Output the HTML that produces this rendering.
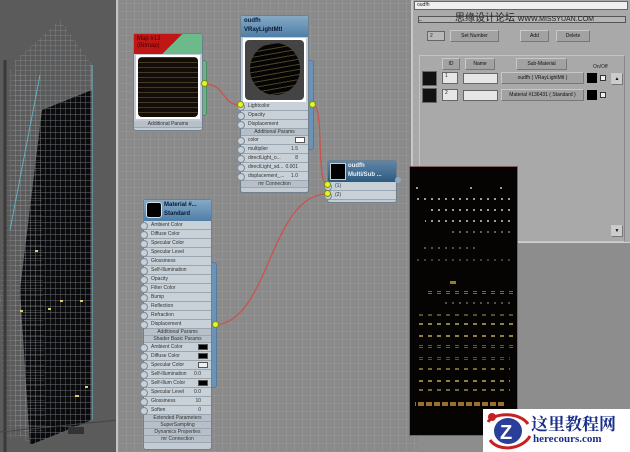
<!DOCTYPE html>
<html><head><meta charset="utf-8"><style>
*{margin:0;padding:0;box-sizing:border-box}
body{width:630px;height:452px;overflow:hidden;position:relative;background:#8d8d8d;font-family:"Liberation Sans",sans-serif;font-size:5.5px;color:#222}
.a{position:absolute}
.canvas{left:118px;top:0;width:300px;height:452px;background-color:#8a8a8a;background-image:repeating-linear-gradient(0deg,rgba(255,255,255,.06) 0 1px,transparent 1px 8px),repeating-linear-gradient(90deg,rgba(255,255,255,.06) 0 1px,transparent 1px 8px)}
.node{position:absolute;background:#c3ccd4;border:1px solid #6f7f8c;border-radius:3px}
.hdr{position:absolute;left:0;right:0;top:0;background:linear-gradient(#86a9c6,#4f7ea6);color:#061a33;font-weight:bold;font-size:6px;line-height:9px}
.row{position:absolute;left:0;right:0;height:9px;border-bottom:1px solid #9aa7b2;line-height:9px;padding-left:7px;color:#333;font-size:5px;background:#c8d0d8}
.row:before{content:"";position:absolute;left:-4px;top:1px;width:6px;height:6px;border-radius:50%;background:#c8d0d8;border:1px solid #7d8a96}
.sep{position:absolute;left:0;right:0;height:7px;line-height:7px;text-align:center;color:#333;font-size:5px;background:#b7c0c8;border-bottom:1px solid #9aa7b2}
.sw{position:absolute;right:3px;top:1px;width:10px;height:6px;background:#000;border:1px solid #555}
.v{position:absolute;right:10px;top:0}
.tab{position:absolute;background:#6b93b8;border:1px solid #557a9c;border-radius:0 3px 3px 0}
.sock{position:absolute;width:7px;height:7px;border-radius:50%;background:#e3f52a;border:1px solid #7b8d1b}
.btn{position:absolute;background:#a2a2a2;border:1px solid #777;border-top-color:#c8c8c8;border-left-color:#c8c8c8;text-align:center;font-size:5px;line-height:10px;color:#111}
.fld{position:absolute;background:#e6e6e6;border:1px solid #666;font-size:5px;padding-left:2px}
</style></head><body>
<div class="a" style="left:0;top:0;width:118px;height:452px;background:#5b5b5b;overflow:hidden">
<svg width="118" height="452">
<defs><pattern id="g" width="5" height="6" patternUnits="userSpaceOnUse"><rect width="5" height="6" fill="#0b0b0c"/><path d="M0 0H5M0 0V6" stroke="#6a6f78" stroke-width="0.9"/></pattern>
<pattern id="w" width="5" height="5" patternUnits="userSpaceOnUse"><path d="M0 0H5M0 0V5" stroke="#9a9fa5" stroke-width="0.5"/></pattern></defs>
<polygon points="60,20 92,65 92,420 30,445 15,430 10,200 15,60" fill="url(#w)"/>
<polygon points="42,110 92,90 92,420 30,445 20,290" fill="url(#g)"/>
<polygon points="10,70 40,80 45,430 5,440 0,300" fill="url(#w)" opacity=".8"/>
<line x1="40" y1="75" x2="10" y2="230" stroke="#5fb0c0"/>
<line x1="92" y1="65" x2="92" y2="420" stroke="#6bc0d0"/>
<line x1="5" y1="60" x2="5" y2="452" stroke="#3a3a3a" stroke-width="3"/>
<g fill="#d8d060"><rect x="35" y="250" width="3" height="2"/><rect x="60" y="300" width="3" height="2"/><rect x="80" y="300" width="3" height="2"/><rect x="20" y="310" width="3" height="2"/><rect x="75" y="395" width="4" height="2"/><rect x="85" y="386" width="3" height="2"/><rect x="48" y="308" width="3" height="2"/></g>
<line x1="0" y1="432" x2="118" y2="420" stroke="#444"/>
<rect x="68" y="427" width="16" height="7" fill="#333"/>
</svg></div>
<div class="a" style="left:116px;top:0;width:3px;height:452px;background:#c4c4c4"></div>
<div class="a canvas"></div>
<svg class="a" style="left:0;top:0" width="630" height="452">
<path d="M205 84 C225 84 222 105 240 105" stroke="#c8544c" stroke-width="1.3" fill="none"/>
<path d="M313 105 C325 105 315 185 328 185" stroke="#c8544c" stroke-width="1.3" fill="none"/>
<path d="M216 325 C270 320 270 195 327 194" stroke="#c8544c" stroke-width="1.3" fill="none"/>
</svg>
<div class="tab" style="left:200px;top:60px;width:7px;height:56px;background:#6cb38b;border-color:#4d8a68"></div>
<div class="node" style="left:133px;top:33px;width:70px;height:98px">
<div class="hdr" style="height:20px;background:linear-gradient(135deg,#c01616 0 55%,#6cb98a 55%);color:#400;font-weight:normal;padding:2px 3px;line-height:7px">Map #13<br>(Bitmap)</div>
<div class="a" style="left:2px;top:21px;width:64px;height:64px;background:#fff;padding:2px"><div style="width:100%;height:100%;background:#120d08;border-radius:4px;background-image:repeating-linear-gradient(0deg,transparent 0 4px,rgba(220,190,120,.25) 4px 5px)"></div></div>
<div class="sep" style="top:87px">Additional Params</div>
</div>
<div class="sock" style="left:201px;top:80px"></div>
<div class="tab" style="left:307px;top:60px;width:7px;height:90px"></div>
<div class="node" style="left:240px;top:15px;width:69px;height:178px">
<div class="hdr" style="height:21px;padding:1px 3px;line-height:9px">oudfh<br>VRayLightMtl</div>
<div class="a" style="left:2px;top:22px;width:63px;height:64px;background:#fff;padding:2px"><div style="width:100%;height:100%;background:#444;border-radius:4px;position:relative"><div style="position:absolute;left:5px;top:3px;width:50px;height:52px;border-radius:50%;background:#050505;background-image:repeating-linear-gradient(170deg,#050505 0 4px,rgba(210,180,90,.35) 4px 5px)"></div></div></div>
<div class="row" style="top:86px">Lightcolor</div>
<div class="row" style="top:95px">Opacity</div>
<div class="row" style="top:104px">Displacement</div>
<div class="sep" style="top:113px">Additional Params</div>
<div class="row" style="top:120px">color<span class="sw" style="background:#fff"></span></div>
<div class="row" style="top:129px">multiplier<span class="v">1.5</span></div>
<div class="row" style="top:138px">directLight_o...<span class="v">8</span></div>
<div class="row" style="top:147px">directLight_sd...<span class="v">0.001</span></div>
<div class="row" style="top:156px">displacement_...<span class="v">1.0</span></div>
<div class="sep" style="top:165px">mr Connection</div>
</div>
<div class="sock" style="left:237px;top:101px"></div>
<div class="sock" style="left:309px;top:101px"></div>
<div class="node" style="left:327px;top:160px;width:70px;height:43px">
<div class="hdr" style="height:21px;padding:1px 3px 1px 20px;line-height:9px;background:linear-gradient(#5e86a8,#2e5a80);color:#e8f0f8">oudfh<br>Multi/Sub ...</div>
<div class="a" style="left:2px;top:2px;width:16px;height:17px;background:#000;border:1px solid #ccc"></div>
<div class="row" style="top:21px">(1)</div>
<div class="row" style="top:30px">(2)</div>
</div>
<div class="sock" style="left:324px;top:181px"></div>
<div class="sock" style="left:324px;top:190px"></div>
<div class="a" style="left:395px;top:177px;width:6px;height:6px;border-radius:50%;background:#8fa8c0"></div>
<div class="tab" style="left:210px;top:262px;width:7px;height:126px"></div>
<div class="node" style="left:143px;top:199px;width:69px;height:251px">
<div class="hdr" style="height:21px;padding:1px 3px 1px 20px;line-height:9px">Material #...<br>Standard</div>
<div class="a" style="left:2px;top:2px;width:16px;height:16px;background:#000;border:1px solid #ddd;border-radius:3px"></div>
<div class="row" style="top:21px">Ambient Color</div>
<div class="row" style="top:30px">Diffuse Color</div>
<div class="row" style="top:39px">Specular Color</div>
<div class="row" style="top:48px">Specular Level</div>
<div class="row" style="top:57px">Glossiness</div>
<div class="row" style="top:66px">Self-Illumination</div>
<div class="row" style="top:75px">Opacity</div>
<div class="row" style="top:84px">Filter Color</div>
<div class="row" style="top:93px">Bump</div>
<div class="row" style="top:102px">Reflection</div>
<div class="row" style="top:111px">Refraction</div>
<div class="row" style="top:120px">Displacement</div>
<div class="sep" style="top:129px">Additional Params</div>
<div class="sep" style="top:136px">Shader Basic Params</div>
<div class="row" style="top:143px">Ambient Color<span class="sw"></span></div>
<div class="row" style="top:152px">Diffuse Color<span class="sw"></span></div>
<div class="row" style="top:161px">Specular Color<span class="sw" style="background:#eee"></span></div>
<div class="row" style="top:170px">Self-Illumination<span class="v">0.0</span></div>
<div class="row" style="top:179px">Self-Illum Color<span class="sw"></span></div>
<div class="row" style="top:188px">Specular Level<span class="v">0.0</span></div>
<div class="row" style="top:197px">Glossiness<span class="v">10</span></div>
<div class="row" style="top:206px">Soften<span class="v">0</span></div>
<div class="sep" style="top:215px">Extended Parameters</div>
<div class="sep" style="top:222px">SuperSampling</div>
<div class="sep" style="top:229px">Dynamics Properties</div>
<div class="sep" style="top:236px">mr Connection</div>
</div>
<div class="sock" style="left:212px;top:321px"></div>
<div class="a" style="left:411px;top:0;width:219px;height:243px;background:#a9a9a9;border-left:2px solid #c8c8c8;border-bottom:1px solid #d0d0d0"></div>
<div class="fld" style="left:414px;top:1px;width:214px;height:9px;line-height:7px;background:#f0f0f0">oudfh</div>
<div class="a" style="left:418px;top:16px;width:208px;height:7px;border:1px solid #555;background:#b5b5b5;font-size:5px;line-height:5px">_</div>
<div class="a" style="left:455px;top:9px;font-family:'Liberation Sans','Noto Sans CJK SC',sans-serif;font-size:10px;color:#222;white-space:nowrap">思缘设计论坛 <span style="font-size:7px">WWW.MISSYUAN.COM</span></div>
<div class="fld" style="left:427px;top:31px;width:18px;height:10px;background:#b8b8b8;line-height:8px">2</div>
<div class="btn" style="left:450px;top:30px;width:49px;height:12px">Set Number</div>
<div class="btn" style="left:520px;top:30px;width:29px;height:12px">Add</div>
<div class="btn" style="left:556px;top:30px;width:34px;height:12px">Delete</div>
<div class="a" style="left:419px;top:55px;width:206px;height:187px;border:1px solid #c4c4c4;border-right-color:#888"></div>
<div class="btn" style="left:442px;top:58px;width:18px;height:12px">ID</div>
<div class="btn" style="left:465px;top:58px;width:30px;height:12px">Name</div>
<div class="btn" style="left:516px;top:58px;width:51px;height:12px">Sub-Material</div>
<div class="a" style="left:593px;top:64px;font-size:5px">On/Off</div>
<div class="a" style="left:422px;top:71px;width:15px;height:15px;background:#111;border:1px solid #666"></div>
<div class="fld" style="left:442px;top:72px;width:16px;height:12px">1</div>
<div class="fld" style="left:463px;top:73px;width:35px;height:11px"></div>
<div class="btn" style="left:501px;top:72px;width:83px;height:12px">oudfh ( VRayLightMtl )</div>
<div class="a" style="left:587px;top:73px;width:10px;height:10px;background:#000"></div>
<div class="a" style="left:600px;top:75px;width:6px;height:6px;background:#eee;border:1px solid #333"></div>
<div class="btn" style="left:611px;top:73px;width:12px;height:12px;background:#ccc">▲</div>
<div class="a" style="left:422px;top:88px;width:15px;height:15px;background:#111;border:1px solid #666"></div>
<div class="fld" style="left:442px;top:89px;width:16px;height:12px">2</div>
<div class="fld" style="left:463px;top:90px;width:35px;height:11px"></div>
<div class="btn" style="left:501px;top:89px;width:83px;height:12px">Material #136431 ( Standard )</div>
<div class="a" style="left:587px;top:90px;width:10px;height:10px;background:#000"></div>
<div class="a" style="left:600px;top:92px;width:6px;height:6px;background:#eee;border:1px solid #333"></div>
<div class="btn" style="left:611px;top:225px;width:12px;height:12px;background:#ccc">▼</div>
<div class="a" style="left:409px;top:166px;width:109px;height:270px;background:#050403;border:1px solid #806060;overflow:hidden">
<svg width="109" height="270">
<defs><pattern id="p1" width="7" height="2" patternUnits="userSpaceOnUse"><rect width="2" height="2" fill="#ddd"/></pattern>
<pattern id="p2" width="9" height="3" patternUnits="userSpaceOnUse"><rect width="4" height="2" fill="#c8b860"/></pattern>
<pattern id="p3" width="8" height="3" patternUnits="userSpaceOnUse"><rect width="6" height="3" fill="#d8a040"/></pattern></defs>
<g opacity=".7">
<rect x="6" y="20" width="2" height="2" fill="#ddd"/><rect x="60" y="20" width="2" height="2" fill="#ddd"/><rect x="90" y="20" width="2" height="2" fill="#ddd"/>
<rect x="5" y="31" width="95" height="2" fill="url(#p1)"/>
<rect x="20" y="42" width="85" height="2" fill="url(#p1)"/>
<rect x="15" y="53" width="90" height="2" fill="url(#p1)"/>
<rect x="40" y="64" width="60" height="2" fill="url(#p1)" opacity=".6"/>
<rect x="10" y="80" width="60" height="2" fill="url(#p1)" opacity=".5"/>
<rect x="5" y="92" width="95" height="2" fill="url(#p1)" opacity=".4"/>
<rect x="40" y="114" width="6" height="3" fill="#d8b030"/>
<rect x="15" y="124" width="90" height="3" fill="url(#p2)" opacity=".8"/>
<rect x="30" y="135" width="75" height="2" fill="url(#p1)" opacity=".5"/>
<rect x="5" y="146" width="100" height="3" fill="url(#p2)" opacity=".6"/>
<rect x="5" y="156" width="100" height="3" fill="url(#p2)"/>
<rect x="5" y="168" width="100" height="3" fill="url(#p2)"/>
<rect x="5" y="178" width="100" height="3" fill="url(#p2)" opacity=".7"/>
<rect x="5" y="190" width="95" height="3" fill="url(#p2)" opacity=".6"/>
<rect x="5" y="200" width="95" height="3" fill="url(#p2)" opacity=".8"/>
<rect x="5" y="212" width="95" height="3" fill="url(#p2)"/>
<rect x="5" y="222" width="95" height="3" fill="url(#p2)" opacity=".8"/>
<rect x="5" y="235" width="90" height="4" fill="url(#p3)"/>
</g>
</svg></div>
<div class="a" style="left:483px;top:409px;width:147px;height:43px;background:#fff"></div>
<svg class="a" style="left:484px;top:410px" width="50" height="42"><ellipse cx="24" cy="21" rx="14" ry="13" fill="#2a3f9a"/><path d="M4 12 C10 2 36 2 44 14" stroke="#c82020" stroke-width="3" fill="none"/><path d="M6 30 C14 42 38 40 46 26" stroke="#c82020" stroke-width="3" fill="none"/><text x="16" y="29" font-family="Liberation Sans" font-weight="bold" font-size="20" fill="#fff">Z</text><circle cx="8" cy="7" r="4" fill="#c82020"/></svg>
<div class="a" style="left:531px;top:410px;font-family:'Liberation Serif','Noto Serif CJK SC',serif;font-size:17px;font-weight:bold;color:#1a2f8a;white-space:nowrap">这里教程网</div>
<div class="a" style="left:533px;top:433px;font-family:'Liberation Serif',serif;font-size:11px;font-weight:bold;color:#1a2f8a">herecours.com</div>
</body></html>
